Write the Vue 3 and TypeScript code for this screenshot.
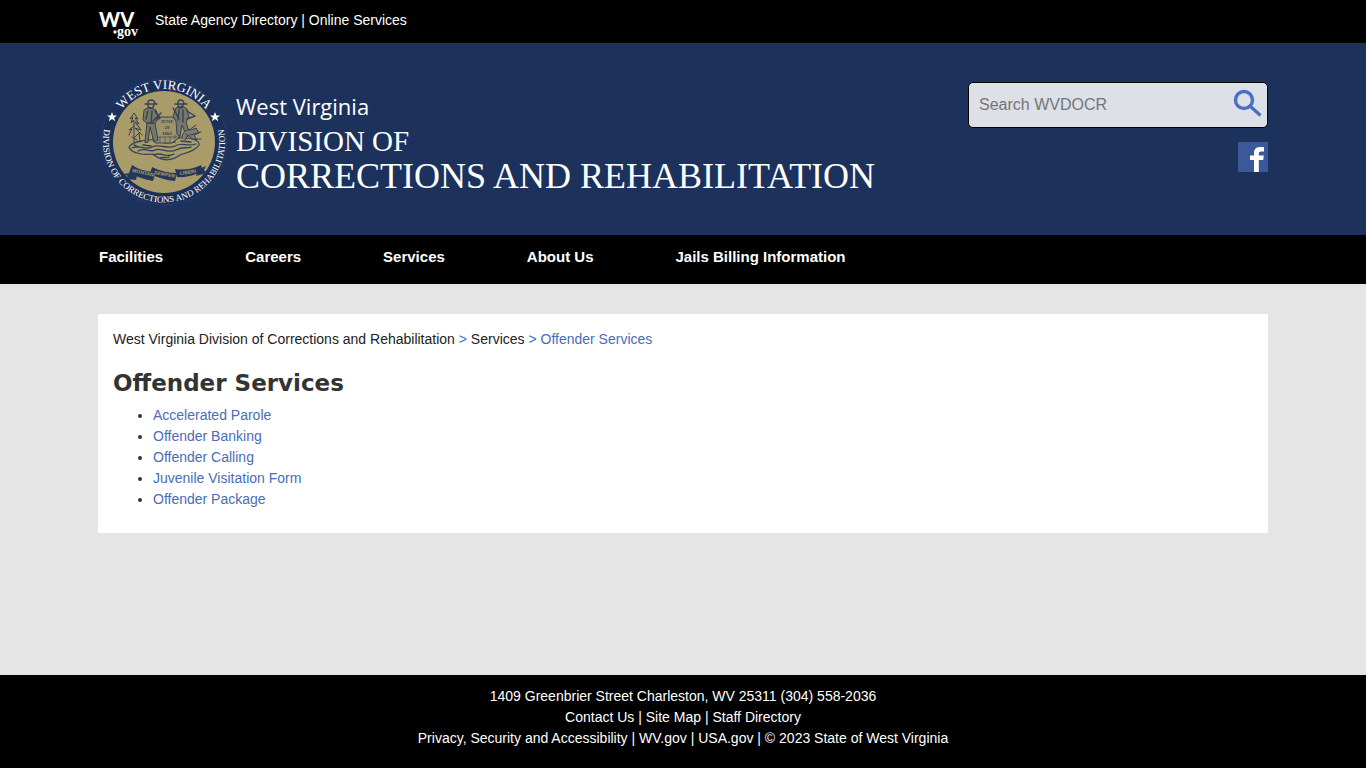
<script setup lang="ts">
import { ref } from 'vue'

interface LinkItem {
  label: string
  href: string
}

const query = ref<string>('')

const menu: LinkItem[] = [
  { label: 'Facilities', href: '#facilities' },
  { label: 'Careers', href: '#careers' },
  { label: 'Services', href: '#services' },
  { label: 'About Us', href: '#about' },
  { label: 'Jails Billing Information', href: '#billing' },
]

const services: LinkItem[] = [
  { label: 'Accelerated Parole', href: '#parole' },
  { label: 'Offender Banking', href: '#banking' },
  { label: 'Offender Calling', href: '#calling' },
  { label: 'Juvenile Visitation Form', href: '#visitation' },
  { label: 'Offender Package', href: '#package' },
]
</script>

<template>
  <div class="page">
    <div class="topbar">
      <div class="container topbar-row">
        <a href="#wv" class="wv" aria-label="WV.gov">
          <svg width="42" height="43" viewBox="0 0 42 43" aria-hidden="true">
            <text x="1" y="27" class="wv-mark">WV</text>
            <circle cx="17" cy="32" r="1.7" fill="#fff" />
            <text x="19" y="36" class="gov">gov</text>
          </svg>
        </a>
        <div class="toplinks"><a href="#agencies">State Agency Directory</a> | <a href="#online">Online Services</a></div>
      </div>
    </div>

    <header class="banner">
      <div class="container banner-row">
        <a href="#home" class="brand">
          <svg class="seal" width="130" height="130" viewBox="0 0 130 130" aria-hidden="true">
            <defs>
              <path id="arc-top" d="M13 66 A53 53 0 0 1 119 66" />
              <path id="arc-bottom" d="M7 50 A61 61 0 1 0 125 50" />
            </defs>
            <circle cx="66" cy="66" r="63" fill="#1b3059" stroke="#263c67" />
            <circle cx="66" cy="66" r="51" fill="#a99c69" />
            <text class="seal-top"><textPath href="#arc-top" startOffset="50%">WEST VIRGINIA</textPath></text>
            <text class="seal-bottom"><textPath href="#arc-bottom" startOffset="50%">DIVISION OF CORRECTIONS AND REHABILITATION</textPath></text>
            <path fill="#fff" d="M14 36l1.300 3.400h3.700l-2.900 2.300 1.100 3.500-3.200-2.100-3.200 2.100 1.100-3.500-2.900-2.300h3.700zM117 36l1.300 3.400h3.700l-2.900 2.300 1.100 3.500-3.200-2.100-3.200 2.100 1.100-3.500-2.900-2.300h3.700z" />
            <g stroke="#34405a" stroke-linecap="round" stroke-linejoin="round">
              <path d="M31 71 C35 65 42 66 49 64 L82 62 C91 61 102 64 101 69 C97 75 90 76 82 79 C72 86 63 85 55 78 C47 79 33 78 31 71Z" fill="#a99c69" stroke-width="1.200" />
              <g fill="none">
                <path d="M34 72c9-4 13 3 20-1s16 3 23-1 12 1 21-2M40 75c8-4 12 2 17-1s13 4 21 0 8-1 15-3M56 79c8-4 12 4 20-1M62 82c3-2 6 1 9-1" stroke-width="1.300" />
                <path d="M45 69l8 1M83 65l10 1M67 67l10-1M36 69l4 2" stroke-width="1.500" />
              </g>
              <path d="M55 64 L56 45 61 41 74 41 80 45 82 61 74 67 58 67Z" fill="#9d946b" stroke-width="1" />
              <path d="M57 61h24M62 61v5M67 61v5M72 61v5M77 59v4" fill="none" stroke-width="1" opacity=".6" />
              <path d="M47 66l2-19-4-3 1-10 5-3 7 3 2 7-3 7 3 16-4 2-4-15-2 15z" fill="#777763" />
              <path d="M79 58l-1-13-3-5 3-8 6-2 5 3 2 8-3 5 4 12-3 3-5-12-2 11z" fill="#777763" />
              <g fill="none" stroke-width="1.400">
                <path d="M47 28h12M50 27c0-4 6-4 7 0M50 29c0 5 5 4 6 0M50 35l-2 8M54 35l-1 12M57 35l5 7-3 2M49 47h7M63 37l-8 8" />
                <path d="M77 28h12M80 27c0-4 5-4 6 0M80 29c0 4 5 4 5 0M81 34l-1 10M85 34v12M75 32l6 11M89 35l8 5-8 3" />
              </g>
              <path d="M36 67V44l-3 3 2-6-3 2 4-6 4 6-3-1 4 6-4-2 6 8-6-2 7 7M36 50l-5 4 3-1-3 6M42 66l-1-9-4 4M34 61l5 3" fill="none" stroke-width="1" />
              <path d="M84 62c0-6 5-9 9-8l5-2 3 5-5 2 3 5-5-1-4-4-3 5M91 54l7-5M92 59l11-3M96 63h7M88 58l4 3" fill="#807e65" stroke-width="1" />
            </g>
            <g fill="#24375b">
              <path d="M25 98 L40 96 38 104 25 103 30 100Z" />
              <path d="M34 89 Q44 96 58 96 L55 105 Q43 103 31 97Z" />
              <path d="M54 91 Q66 97 79 97 L77 105 Q65 104 52 98Z" />
              <path d="M77 93 Q91 95 103 89 L105 95 Q92 102 79 101Z" />
              <path d="M101 93 L108 90 106 94 109 97 98 100Z" />
            </g>
            <g class="motto"><text transform="translate(34 96) rotate(12)">MONTANI</text><text transform="translate(56 98) rotate(11)">SEMPER</text><text transform="translate(82 99) rotate(-8)">LIBERI</text></g>
            <g class="rock"><text x="69" y="47">JUNE</text><text x="69" y="53">20</text><text x="69" y="59">1863</text></g>
          </svg>
          <span class="brand-text">
            <span class="brand-state">West Virginia</span>
            <span class="brand-division">DIVISION OF</span>
            <span class="brand-name">CORRECTIONS AND REHABILITATION</span>
          </span>
        </a>
        <div class="tools">
          <form class="search" role="search" @submit.prevent>
            <input v-model="query" type="text" aria-label="Search WVDOCR" placeholder="Search WVDOCR" />
            <button type="submit" aria-label="Search">
              <svg width="30" height="30" viewBox="0 0 30 30" aria-hidden="true">
                <circle cx="11" cy="11" r="8.500" fill="none" stroke="#4b6fc4" stroke-width="3.400" />
                <path d="M17 17 L27.500 26.500" stroke="#4b6fc4" stroke-width="3.400" />
              </svg>
            </button>
          </form>
          <a href="#facebook" class="facebook" aria-label="Facebook">
            <svg width="30" height="30" viewBox="0 0 30 30" aria-hidden="true">
              <rect width="30" height="30" fill="#3b5998" />
              <path fill="#fff" d="M16 30V18h-4v-4.500h4V11c0-4 2.500-6 6-6h4v4.500h-2.600c-2 0-2.600.8-2.600 2.300v1.700h5L25.200 18h-4.400v12z" />
            </svg>
          </a>
        </div>
      </div>
    </header>

    <nav class="menu" aria-label="Main">
      <ul class="container">
        <li v-for="item in menu" :key="item.href"><a :href="item.href">{{ item.label }}</a></li>
      </ul>
    </nav>

    <main class="container card">
      <nav class="crumbs" aria-label="Breadcrumb"><a href="#home" class="dark">West Virginia Division of Corrections and Rehabilitation</a> &gt; <a href="#services" class="dark">Services</a> &gt; <a href="#offender">Offender Services</a></nav>
      <h1>Offender Services</h1>
      <ul class="services">
        <li v-for="item in services" :key="item.href"><a :href="item.href">{{ item.label }}</a></li>
      </ul>
    </main>

    <footer class="footer">
      <div>1409 Greenbrier Street Charleston, WV 25311 (304) 558-2036</div>
      <div><a href="#contact">Contact Us</a> | <a href="#map">Site Map</a> | <a href="#staff">Staff Directory</a></div>
      <div><a href="#privacy">Privacy, Security and Accessibility</a> | <a href="#wv">WV.gov</a> | <a href="#usa">USA.gov</a> | © 2023 State of West Virginia</div>
    </footer>
  </div>
</template>

<style>
body {
  margin: 0;
}
</style>

<style scoped>
.page {
  display: flex;
  flex-direction: column;
  min-height: 100vh;
  background: #e5e5e5;
  color: #333;
  font: 14px/21px "Liberation Sans", Arial, sans-serif;
}
.page * {
  box-sizing: border-box;
}
a {
  color: inherit;
  text-decoration: none;
}
.container {
  width: 100%;
  max-width: 1170px;
  margin: 0 auto;
}
.topbar {
  background: #000;
  color: #fff;
}
.topbar-row {
  display: flex;
  gap: 15px;
}
.toplinks {
  padding-top: 10px;
}
.wv {
  display: flex;
}
.wv-mark {
  font: 900 20px Lato, sans-serif;
  fill: #fff;
}
.gov {
  font: bold 14px "Liberation Serif", serif;
  fill: #fff;
}
.banner {
  background: #1c325d;
}
.banner-row {
  display: flex;
  justify-content: space-between;
  min-height: 192px;
  padding-top: 33px;
}
.brand {
  display: flex;
  align-items: flex-start;
  gap: 8px;
  color: #fff;
}
.seal-top {
  font: 13px "Liberation Serif", serif;
  fill: #fff;
  text-anchor: middle;
}
.seal-bottom {
  font: 9px "Liberation Serif", serif;
  fill: #fff;
  text-anchor: middle;
}
.motto {
  font: bold 5px "Liberation Sans", sans-serif;
  fill: #a99c69;
}
.rock {
  font: bold 5px "Liberation Serif", serif;
  fill: #34405a;
  text-anchor: middle;
}
.brand-text {
  display: flex;
  flex-direction: column;
  padding-top: 14px;
  font-family: "Liberation Serif", serif;
  white-space: nowrap;
}
.brand-state {
  font: 22px/32px "Open Sans", sans-serif;
}
.brand-division {
  font-size: 29px;
  line-height: 38px;
}
.brand-name {
  font-size: 36px;
  line-height: 32px;
}
.tools {
  display: flex;
  flex-direction: column;
  align-items: flex-end;
  gap: 14px;
  padding-top: 6px;
}
.search {
  display: flex;
  width: 300px;
  height: 46px;
  border: 1px solid #000;
  border-radius: 5px;
  background: #dde0e7;
}
.search input {
  flex: 1;
  min-width: 0;
  padding: 0 10px;
  border: 0;
  background: transparent;
  color: #333;
  font: 16px "Liberation Sans", Arial, sans-serif;
}
.search input::placeholder {
  color: #757575;
}
.search button {
  display: flex;
  padding: 6px 4px 0 0;
  border: 0;
  background: transparent;
}
.facebook {
  display: flex;
}
.menu {
  background: #000;
  color: #fff;
  font-size: 15px;
  font-weight: bold;
}
.menu ul {
  display: flex;
  gap: 82px;
  height: 49px;
  padding: 11px 1px 0;
  list-style: none;
}
.card {
  margin-top: 30px;
  padding: 15px 15px 23px;
  background: #fff;
}
.crumbs,
.card a {
  color: #4a6cb8;
}
.card .dark {
  color: #222;
}
h1 {
  margin: 17px 0 6px;
  font: bold 23px/32px Verdana, "DejaVu Sans", sans-serif;
}
.services {
  margin: 0;
  padding-left: 40px;
}
.footer {
  margin-top: auto;
  padding: 11px 0 19px;
  background: #000;
  color: #fff;
  text-align: center;
}
</style>
